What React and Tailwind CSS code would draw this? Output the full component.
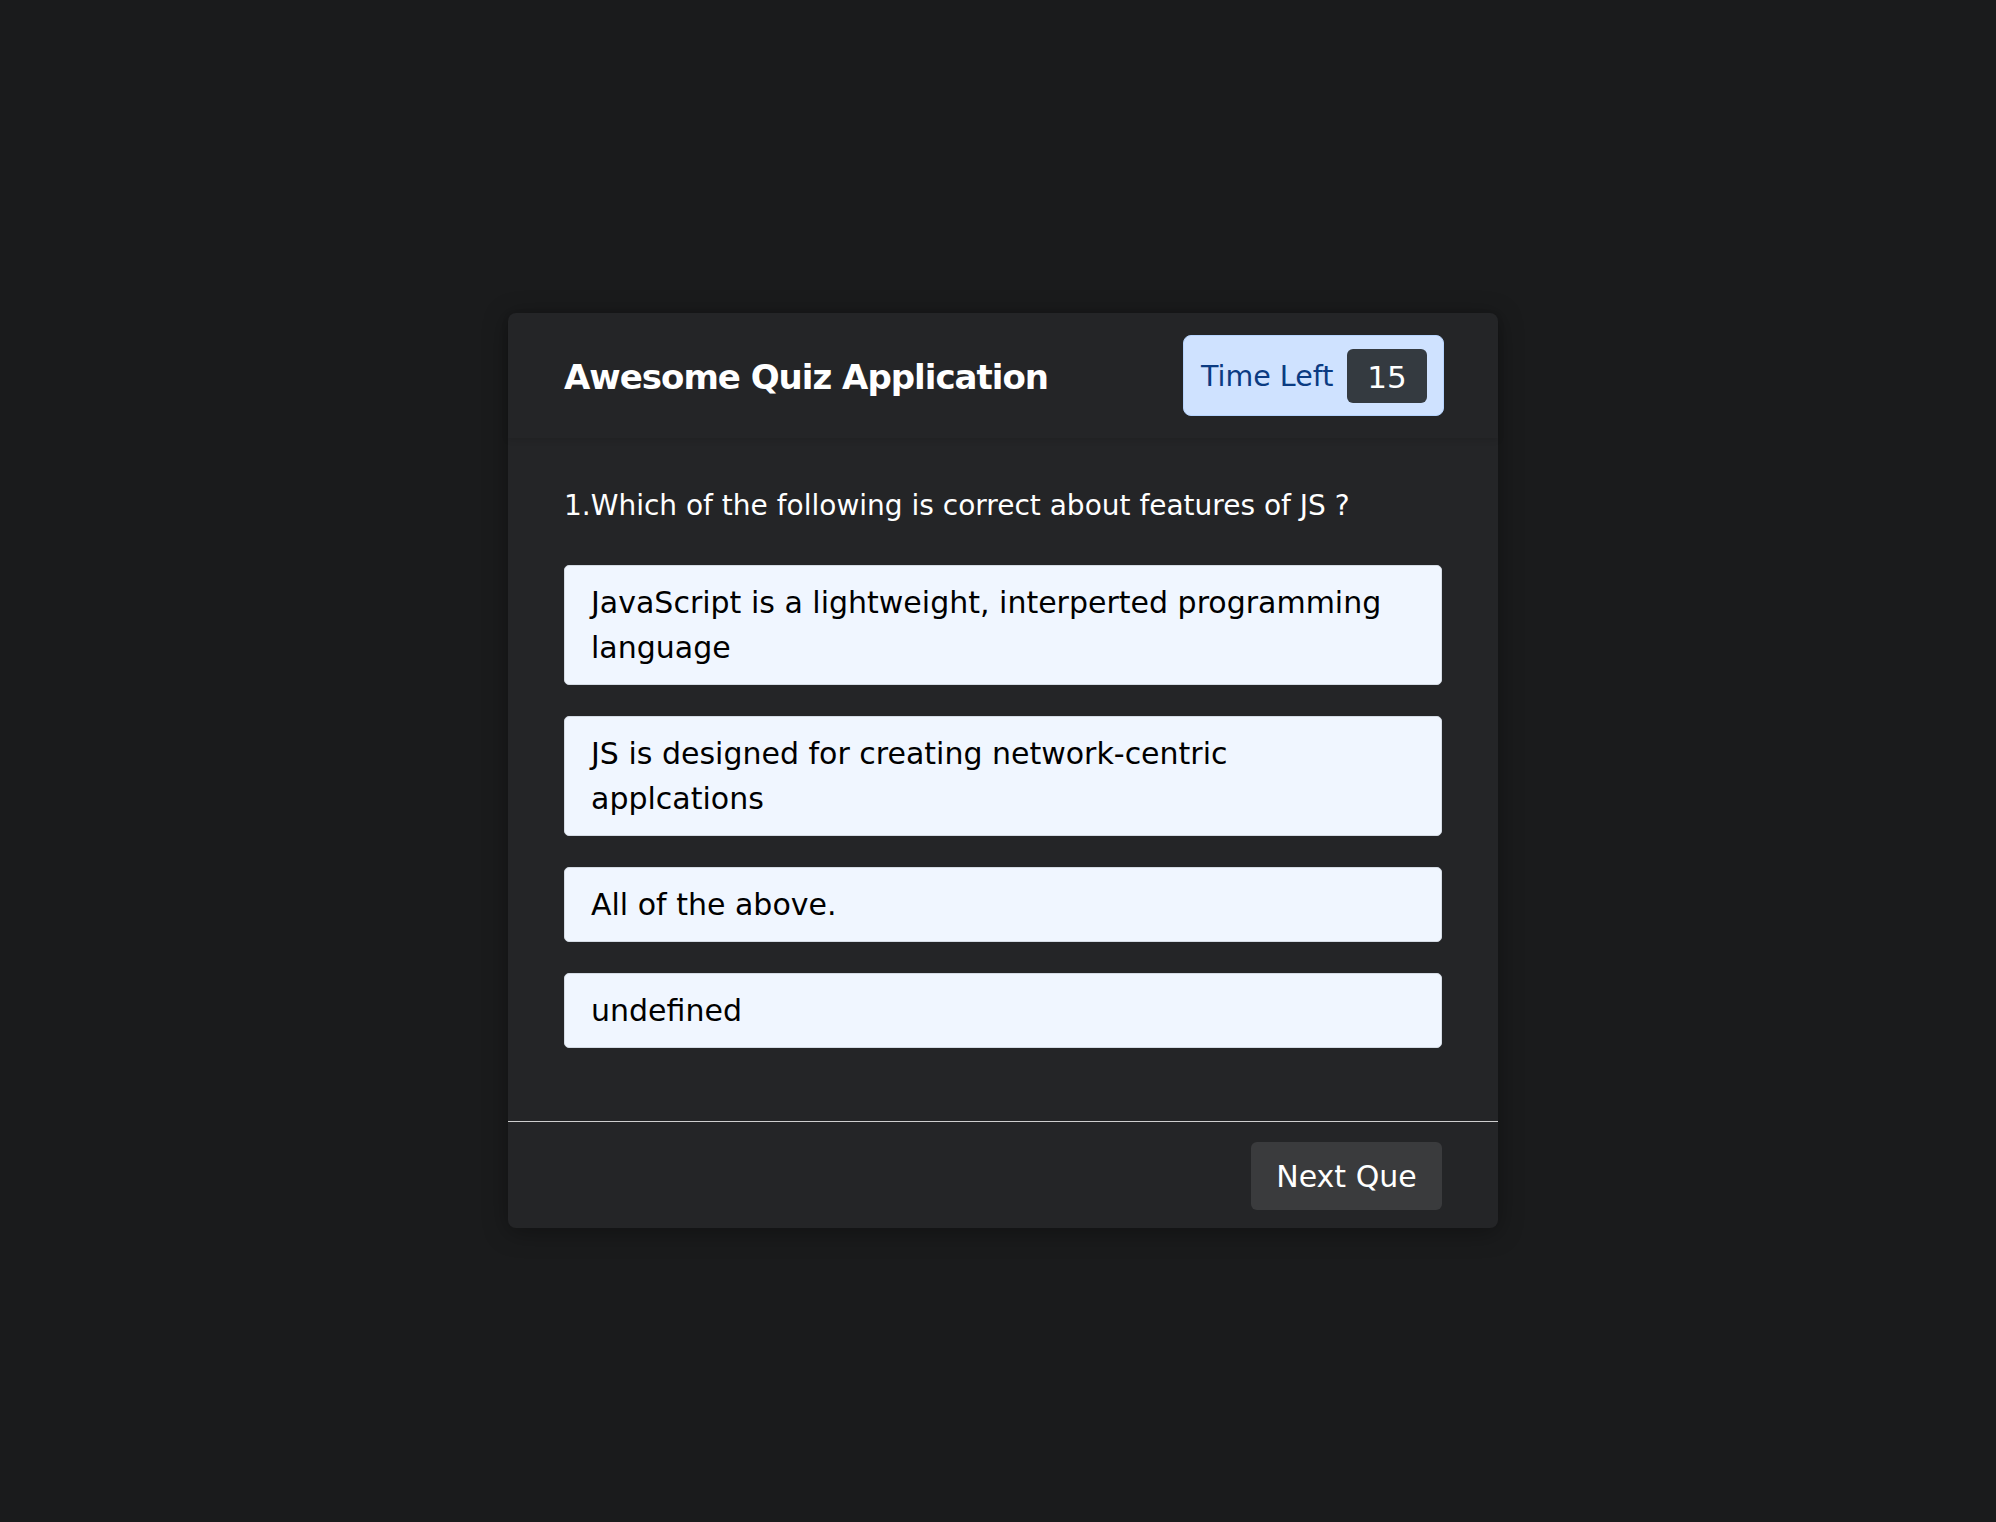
export default function App() {
  const options = [
    "JavaScript is a lightweight, interperted programming language",
    "JS is designed for creating network-centric applcations",
    "All of the above.",
    "undefined",
  ];
  return (
    <div className="w-full h-[1522px] bg-[#1a1b1c] flex items-center justify-center pl-[10px] pt-[19px] font-['DejaVu_Sans',sans-serif]">
      <div className="w-[990px] rounded-lg bg-[#242527] shadow-[0_4px_24px_rgba(0,0,0,0.35)] flex flex-col">
        <div className="h-[125px] flex items-center justify-between pl-[56px] pr-[54px] rounded-t-lg shadow-[0_2px_6px_rgba(0,0,0,0.12)]">
          <h1 className="text-[34px] font-bold text-white leading-none tracking-[-1px] pt-[3px]">Awesome Quiz Application</h1>
          <div className="h-[81px] w-[261px] flex items-center justify-between pl-[17px] pr-[16px] rounded-lg bg-[#cfe2ff] border border-[#b6d4fe]">
            <span className="text-[28.5px] text-[#0b3b82] leading-none pt-[3px]">Time Left</span>
            <span className="w-[80px] h-[54px] rounded-md bg-[#343a40] text-white text-[31px] flex items-center justify-center pt-[3px]">15</span>
          </div>
        </div>
        <div className="pt-[47px] pb-[73px] px-[56px]">
          <p className="text-[28px] leading-[42px] text-white mb-[38px]">1.Which of the following is correct about features of JS ?</p>
          <div className="flex flex-col gap-[31px]">
            {options.map((o) => (
              <div key={o} className="bg-[#f0f6ff] border border-[#d4dbe4] rounded-[5px] pl-[26px] pr-[40px] py-[14px] text-[30px] leading-[45px] text-black">
                {o}
              </div>
            ))}
          </div>
        </div>
        <div className="h-px bg-[#cfcfcf]"></div>
        <div className="h-[106px] flex items-center justify-end pr-[56px] pt-[2px]">
          <button className="h-[68px] w-[191px] rounded-md bg-[#3a3b3d] text-white text-[30px] flex items-center justify-center">Next Que</button>
        </div>
      </div>
    </div>
  );
}
